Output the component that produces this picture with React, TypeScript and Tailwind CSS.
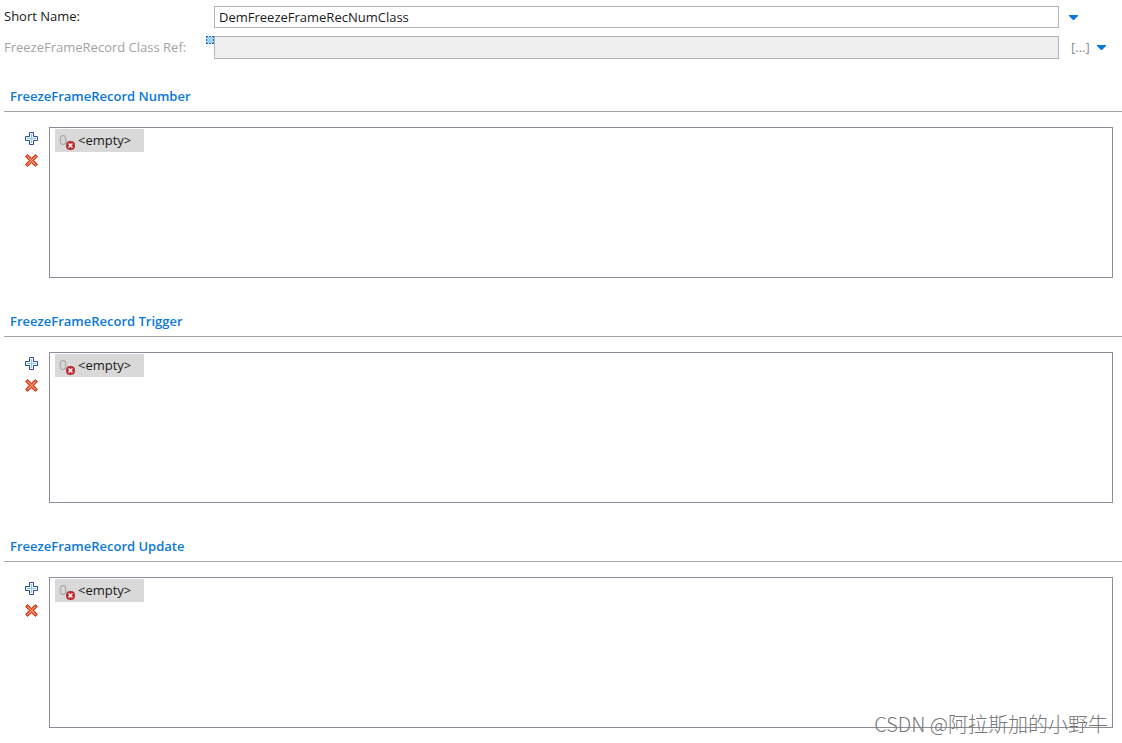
import React, { FC } from 'react'

interface SectionProps {
  title: string
  items: string[]
}

const ArrowIcon: FC = () => (
  <svg width="9" height="5" viewBox="0 0 9 5" className="block">
    <path d="M0 0H9V1L5 5H4L0 1Z" fill="#0a78d7" />
  </svg>
)

const PlusIcon: FC = () => (
  <svg width="13" height="13" viewBox="0 0 13 13" className="block">
    <path d="M4.5 0.5H8.5V4.5H12.5V8.5H8.5V12.5H4.5V8.5H0.5V4.5H4.5Z" fill="#f2faff" stroke="#34499a" strokeLinejoin="round" />
    <path d="M6.5 2V11M2 6.5H11" stroke="#8cc6f5" strokeWidth="1.2" />
  </svg>
)

const DeleteIcon: FC = () => (
  <svg width="13" height="13" viewBox="0 0 13 13" className="block">
    <path
      d="M2.5 0.6L6.5 4.2L10.5 0.6L12.4 2.5L8.8 6.5L12.4 10.5L10.5 12.4L6.5 8.8L2.5 12.4L0.6 10.5L4.2 6.5L0.6 2.5Z"
      fill="#f4562c"
      stroke="#c23a1c"
      strokeLinejoin="round"
    />
    <path d="M2.5 2.5L10.5 10.5M10.5 2.5L2.5 10.5" stroke="#ffab8c" />
  </svg>
)

const ErrorIcon: FC = () => (
  <svg width="9" height="9" viewBox="0 0 9 9" className="absolute left-[7px] top-[12px]">
    <rect x="0.5" y="0.5" width="8" height="8" rx="3" fill="#c8282f" stroke="#a8343a" />
    <path d="M2.6 2.6L6.4 6.4M6.4 2.6L2.6 6.4" stroke="#fff" strokeWidth="1.4" />
  </svg>
)

const MarkerIcon: FC = () => (
  <svg width="8" height="8" viewBox="0 0 8 8" className="block">
    <rect width="8" height="8" fill="#d3e9fb" />
    <rect x="1" y="1" width="6" height="6" fill="#9fd0f7" />
    <path d="M0 0.5H8M0 7.5H8" stroke="#2467b3" strokeDasharray="2 1" />
    <path d="M0.5 0V8M7.5 0V8" stroke="#2467b3" strokeDasharray="2 1" />
  </svg>
)

const Section: FC<SectionProps> = (props) => {
  const { title, items } = props

  return (
    <section className="mb-[33px]">
      <h2 className="ml-1 h-[26px] border-b border-[#a5a5a5] pl-[6px] text-[13px] leading-5 font-semibold text-[#0a78d7]">{title}</h2>
      <div className="mt-[15px] mr-[9px] flex">
        <div className="flex w-[49px] flex-col gap-[9px] pt-[5px] pl-[25px]">
          <button type="button" aria-label={`Add to ${title}`}><PlusIcon /></button>
          <button type="button" aria-label={`Remove from ${title}`}><DeleteIcon /></button>
        </div>
        <ul className="h-[151px] flex-1 border border-[#8b8e99] px-[5px] py-px">
          {items.map(item => (
            <li key={item} className="flex h-[23px] w-[89px] bg-[#d9d9d9] pl-1 leading-[22px]">
              <span className="relative w-[19px] text-[14px] text-[#a8a8a8]">
                0
                <ErrorIcon />
              </span>
              <span>{item}</span>
            </li>
          ))}
        </ul>
      </div>
    </section>
  )
}

const sections = ['FreezeFrameRecord Number', 'FreezeFrameRecord Trigger', 'FreezeFrameRecord Update']

const App: FC = () => {
  const [shortName, setShortName] = React.useState('DemFreezeFrameRecNumClass')

  return (
    <main className="relative overflow-hidden bg-white pt-[6px] font-['Open_Sans','Noto_Sans_CJK_SC',sans-serif] text-[13px] text-[#1a1a1a]">
      <div className="flex h-[22px] items-center pl-1">
        <label htmlFor="short-name" className="w-[210px]">Short Name:</label>
        <input
          id="short-name"
          className="h-[22px] min-w-0 flex-1 border border-[#b3b3bb] bg-white px-1 outline-none"
          value={shortName}
          onChange={e => setShortName(e.target.value)}
        />
        <div className="flex w-[63px] pl-[10px]">
          <button type="button" aria-label="Short Name menu"><ArrowIcon /></button>
        </div>
      </div>
      <div className="mt-2 flex h-[23px] items-center pl-1">
        <label htmlFor="class-ref" className="w-[202px] text-[#a3a3a3]">FreezeFrameRecord Class Ref:</label>
        <div className="h-[23px] w-2">
          <MarkerIcon />
        </div>
        <input id="class-ref" disabled className="h-[23px] min-w-0 flex-1 border border-[#b3b3bb] bg-[#efefef] px-1" />
        <div className="flex w-[63px] items-center gap-2 pl-3">
          <button type="button" className="w-[18px] text-left text-[#8c8c8c]">[...]</button>
          <button type="button" aria-label="Class Ref menu"><ArrowIcon /></button>
        </div>
      </div>
      <div className="mt-[27px]">
        {sections.map(title => <Section key={title} title={title} items={['<empty>']} />)}
      </div>
      <div className="absolute right-[14px] bottom-[23px] font-['Noto_Sans_CJK_SC',sans-serif] text-[20px] leading-7 font-light text-[#777777]">
        CSDN @阿拉斯加的小野牛
      </div>
    </main>
  )
}

export default App
